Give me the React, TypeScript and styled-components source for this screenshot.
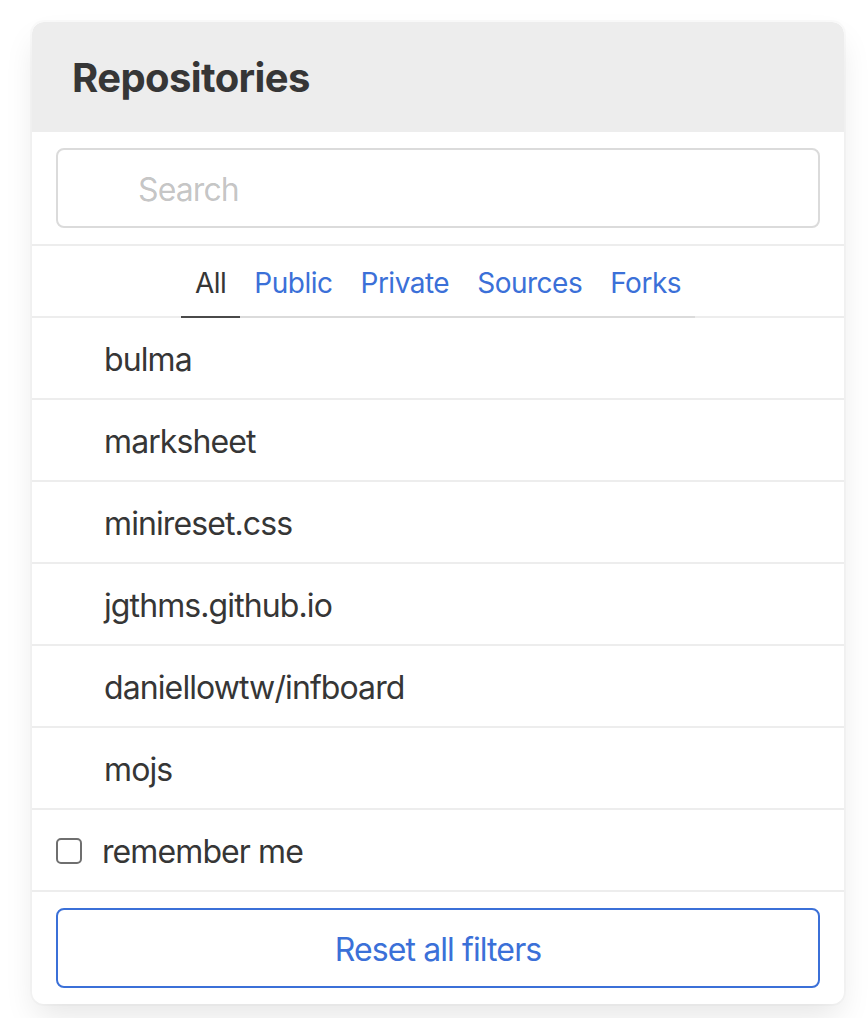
import React from "react";
import styled, { createGlobalStyle } from "styled-components";

const Global = createGlobalStyle`
  html, body { margin: 0; padding: 0; background: #fff; }
  body { font-family: Inter, "Open Sans", "Liberation Sans", sans-serif; color: #363636; }
  * { box-sizing: border-box; }
`;

const Page = styled.div`
  padding: 22px 24px 14px 32px;
`;

const Panel = styled.nav`
  border-radius: 12px;
  background: #fff;
  box-shadow: 0 16px 32px -4px rgba(10, 10, 10, 0.1), 0 0 0 2px rgba(10, 10, 10, 0.02);
  font-size: 32px;
  letter-spacing: -0.9px;
  overflow: hidden;
`;

const Heading = styled.p`
  margin: 0;
  background: #ededed;
  border-radius: 12px 12px 0 0;
  color: #363636;
  font-size: 40px;
  font-weight: 700;
  line-height: 1.25;
  padding: 31px 40px 29px;
  letter-spacing: -0.6px;
`;

const Block = styled.div<{ $text?: boolean }>`
  display: flex;
  align-items: center;
  justify-content: flex-start;
  padding: ${(p) => (p.$text ? "18px 24px 14px" : "16px 24px")};
  border-bottom: 2px solid #ededed;
  color: #363636;
  line-height: 1.5;
  &:last-child { border-bottom: none; }
`;

const LabelBlock = styled.label`
  display: flex;
  align-items: center;
  padding: 18px 24px 14px;
  border-bottom: 2px solid #ededed;
  color: #363636;
  line-height: 1.5;
  cursor: pointer;
`;

const SearchInput = styled.input`
  width: 100%;
  height: 80px;
  border: 2px solid #dbdbdb;
  border-radius: 8px;
  padding: 2px 22px 0 80px;
  font-family: inherit;
  font-size: 32px;
  letter-spacing: -0.9px;
  color: #363636;
  outline: none;
  &::placeholder { color: rgba(54, 54, 54, 0.3); }
`;

const Tabs = styled.p`
  margin: 0;
  display: flex;
  justify-content: center;
  align-items: flex-end;
  font-size: 28px;
  letter-spacing: -0.5px;
  line-height: 1.5;
  border-bottom: 2px solid #ededed;
`;

const Tab = styled.a<{ $active?: boolean }>`
  padding: 16px 14px 12px;
  margin-bottom: -2px;
  border-bottom: 2px solid ${(p) => (p.$active ? "#4a4a4a" : "#dbdbdb")};
  color: ${(p) => (p.$active ? "#363636" : "#3b70d8")};
  text-decoration: none;
  cursor: pointer;
`;

const Icon = styled.span`
  display: inline-block;
  width: 28px;
  height: 28px;
  margin-right: 20px;
  flex: none;
`;

const Check = styled.input`
  appearance: none;
  width: 26px;
  height: 26px;
  margin: -2px 20px 0 0;
  border: 2px solid #6f6f6f;
  border-radius: 5px;
  background: #fff;
  flex: none;
`;

const ResetButton = styled.button`
  width: 100%;
  height: 80px;
  border: 2px solid #3b70d8;
  border-radius: 8px;
  background: #fff;
  color: #3b70d8;
  font-family: inherit;
  font-size: 32px;
  letter-spacing: -0.9px;
  padding-top: 3px;
  cursor: pointer;
`;

const repos = [
  "bulma",
  "marksheet",
  "minireset.css",
  "jgthms.github.io",
  "daniellowtw/infboard",
  "mojs",
];

const tabs = ["All", "Public", "Private", "Sources", "Forks"];

export default function App() {
  return (
    <>
      <Global />
      <Page>
        <Panel>
          <Heading>Repositories</Heading>
          <Block>
            <SearchInput type="text" placeholder="Search" />
          </Block>
          <Tabs>
            {tabs.map((t, i) => (
              <Tab key={t} $active={i === 0}>
                {t}
              </Tab>
            ))}
          </Tabs>
          {repos.map((r) => (
            <Block key={r} $text>
              <Icon />
              {r}
            </Block>
          ))}
          <LabelBlock>
            <Check type="checkbox" />
            remember me
          </LabelBlock>
          <Block>
            <ResetButton>Reset all filters</ResetButton>
          </Block>
        </Panel>
      </Page>
    </>
  );
}
